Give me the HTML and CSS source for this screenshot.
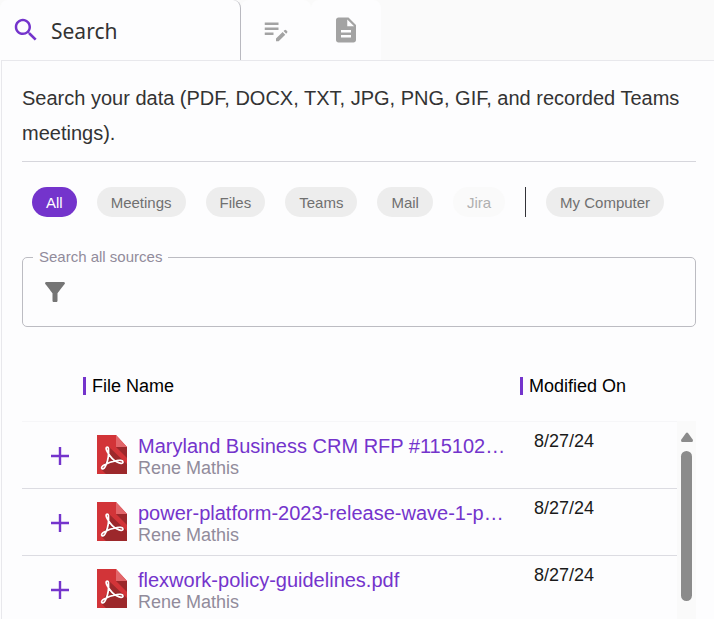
FILE: index.html
```html
<!DOCTYPE html>
<html lang="en">
<head>
<meta charset="utf-8">
<title>Search</title>
<link rel="stylesheet" href="styles.css">
</head>
<body>
<svg class="defs" aria-hidden="true">
  <symbol id="pdf" viewBox="0 0 30 39">
    <path fill="#d23438" d="M0 0h19l11 12v27H0z"/>
    <path fill="#9c282b" d="M12 12l18 17v10H9l-5-5 6-10z"/>
    <path fill="#9c282b" d="M19 12h11v11z"/>
    <path fill="#e2666a" d="M19 0l11 12H19z"/>
    <path fill="none" stroke="#fff" stroke-width="1.700" stroke-linejoin="round" stroke-linecap="round" d="M11.500 14.500c.3-1.800-1.100-3-2-2.100-1 1 .1 3.200 1.100 4.800 2.600 4.500 6 8.300 9.400 9.900 2.800 1.400 6 2 6-.1 0-1.900-3.600-2-6.400-1.400-4.500.7-8.900 2.300-12.400 4.400-2 1.200-3.400 2.800-2.200 3.700 1.400 1 3-1.400 4-3.700 1.800-4.200 2.900-10.500 2.500-15.500z"/>
  </symbol>
  <symbol id="plus" viewBox="0 0 24 24"><path d="M3 10.800h7.800V3h2.400v7.800H21v2.400h-7.800V21h-2.400v-7.800H3z"/></symbol>
</svg>

<nav class="tabs" aria-label="Sections">
  <button class="tab tab-active" type="button">
    <svg class="icon" viewBox="0 0 24 24"><path d="M15.500 14h-.79l-.28-.27C15.410 12.590 16 11.110 16 9.500 16 5.910 13.090 3 9.500 3S3 5.910 3 9.500 5.910 16 9.500 16c1.610 0 3.090-.59 4.230-1.570l.27.28v.79l5 4.990L20.490 19l-4.990-5zm-6 0C7.010 14 5 11.990 5 9.500S7.010 5 9.500 5 14 7.010 14 9.500 11.990 14 9.500 14z"/></svg>
    <span>Search</span>
  </button>
  <button class="tab" type="button" aria-label="Compose">
    <svg class="icon" viewBox="0 0 24 24"><path d="M3 10h11v2H3v-2zm0-2h11V6H3v2zm0 8h7v-2H3v2zm15.010-3.130.71-.71a.996.996 0 0 1 1.410 0l.71.71c.39.39.39 1.020 0 1.410l-.71.71-2.120-2.120zm-.71.71-5.300 5.300V21h2.120l5.300-5.300-2.120-2.120z"/></svg>
  </button>
  <button class="tab" type="button" aria-label="Document">
    <svg class="icon" viewBox="0 0 24 24"><path d="M14 2H6c-1.100 0-1.990.9-1.990 2L4 20c0 1.100.89 2 1.990 2H18c1.100 0 2-.9 2-2V8l-6-6zm2 16H8v-2h8v2zm0-4H8v-2h8v2zm-3-5V3.500L18.500 9H13z"/></svg>
  </button>
</nav>

<main class="panel">
  <p class="intro">Search your data (PDF, DOCX, TXT, JPG, PNG, GIF, and recorded Teams meetings).</p>

  <div class="chips">
    <button class="chip chip-active" type="button">All</button>
    <button class="chip" type="button">Meetings</button>
    <button class="chip" type="button">Files</button>
    <button class="chip" type="button">Teams</button>
    <button class="chip" type="button">Mail</button>
    <button class="chip" type="button" disabled>Jira</button>
    <span class="divider"></span>
    <button class="chip" type="button">My Computer</button>
  </div>

  <fieldset class="search">
    <legend><label for="query">Search all sources</label></legend>
    <div class="search-row">
      <svg class="icon" viewBox="0 0 24 24"><path d="M4.250 5.610C6.270 8.200 10 13 10 13v6c0 .55.45 1 1 1h2c.55 0 1-.45 1-1v-6s3.720-4.800 5.740-7.390A.998.998 0 0 0 18.950 4H5.040c-.83 0-1.300.95-.79 1.610z"/></svg>
      <input id="query" type="text">
    </div>
  </fieldset>

  <div class="results">
    <table>
      <thead>
        <tr>
          <th class="col-add"></th>
          <th><span class="heading">File Name</span></th>
          <th class="col-date"><span class="heading">Modified On</span></th>
        </tr>
      </thead>
      <tbody>
        <tr>
          <td class="add"><button type="button" aria-label="Add"><svg><use href="#plus"/></svg></button></td>
          <td><div class="file"><svg class="pdf"><use href="#pdf"/></svg><div class="file-text"><a href="#">Maryland Business CRM RFP #115102…</a><span>Rene Mathis</span></div></div></td>
          <td class="date">8/27/24</td>
        </tr>
        <tr>
          <td class="add"><button type="button" aria-label="Add"><svg><use href="#plus"/></svg></button></td>
          <td><div class="file"><svg class="pdf"><use href="#pdf"/></svg><div class="file-text"><a href="#">power-platform-2023-release-wave-1-p…</a><span>Rene Mathis</span></div></div></td>
          <td class="date">8/27/24</td>
        </tr>
        <tr>
          <td class="add"><button type="button" aria-label="Add"><svg><use href="#plus"/></svg></button></td>
          <td><div class="file"><svg class="pdf"><use href="#pdf"/></svg><div class="file-text"><a href="#">flexwork-policy-guidelines.pdf</a><span>Rene Mathis</span></div></div></td>
          <td class="date">8/27/24</td>
        </tr>
      </tbody>
    </table>
    <div class="scrollbar" aria-hidden="true">
      <svg class="arrow" viewBox="0 0 12 10"><path d="M5 1Q6 0 7 1l5 7q0 2-1 2H1Q0 10 0 8z"/></svg>
      <div class="thumb"></div>
    </div>
  </div>
</main>
</body>
</html>
```

FILE: styles.css
```css
* { box-sizing: border-box; }

body {
  margin: 0;
  height: 100vh;
  display: flex;
  flex-direction: column;
  overflow: hidden;
  background: #fdfdfe;
  color: #333;
  font-family: "Liberation Sans", Arial, sans-serif;
}

button, input { font: inherit; color: inherit; }
button { border: 0; margin: 0; padding: 0; background: none; }

.defs { position: absolute; width: 0; height: 0; }
.icon { width: 30px; height: 30px; flex: none; fill: currentColor; }

.tabs {
  display: flex;
  height: 60px;
  flex: none;
  background: #fafafa;
}

.tab {
  display: flex;
  align-items: center;
  justify-content: center;
  width: 70px;
  border-radius: 8px 8px 0 0;
  background: #fdfdfe;
  color: #a3a3a3;
}

.tab-active {
  width: 241px;
  justify-content: flex-start;
  gap: 10px;
  padding-left: 11px;
  border-right: 1px solid #b9b9c0;
  color: #7434cc;
  font-family: "Noto Sans", sans-serif;
  font-size: 21px;
}

.tab-active span { padding-top: 2px; color: #333; }

.panel {
  flex: 1;
  min-height: 0;
  margin-left: 1px;
  padding: 20px 18px 0 20px;
  border: solid #e8e8ec;
  border-width: 1px 0 0 1px;
  overflow: hidden;
}

.intro {
  margin: 0;
  padding-bottom: 10px;
  border-bottom: 1px solid #d6d6dc;
  font-size: 20px;
  line-height: 35px;
}

.chips { display: flex; gap: 20px; padding: 25px 10px 0; }

.chip {
  height: 30px;
  padding: 0 14px;
  border-radius: 15px;
  background: #ededed;
  color: #707070;
  font-size: 15px;
  white-space: nowrap;
}

.chip-active { background: #7434cc; color: #fff; }
.chip:disabled { background: #fafafa; color: #b0b0b0; }
.divider { width: 1px; background: #333338; }

.search {
  margin: 31px 0 0;
  padding: 0 10px;
  border: 1px solid #bcbcc2;
  border-radius: 5px;
}

.search legend {
  padding: 0 6px;
  color: #918b9b;
  font-size: 15px;
  line-height: 18px;
}

.search-row {
  display: flex;
  align-items: center;
  gap: 10px;
  height: 60px;
  padding: 0 7px 8px;
  color: #757575;
}

.search-row input {
  flex: 1;
  min-width: 0;
  height: 36px;
  border: 0;
  outline: 0;
  background: none;
  font-size: 18px;
}

.results { display: flex; margin-top: 24px; }

table {
  flex: 1;
  table-layout: fixed;
  width: 0;
  border-collapse: collapse;
  font-size: 18px;
  line-height: 20px;
}

th, td { padding: 0; text-align: left; }
th { height: 70px; color: #000; font-weight: 400; }
tr { border-bottom: 1px solid #dcdce2; }
thead tr { border-color: #f6f6f8; }
.col-add { width: 61px; }
.col-date { width: 157px; }

.heading {
  display: block;
  padding-left: 6px;
  border-left: 3px solid #7434cc;
  line-height: 18px;
}

td { height: 67px; padding-top: 2px; }
.add button { display: block; width: 24px; height: 24px; margin-left: 26px; }
.add svg { display: block; width: 24px; height: 24px; fill: #7434cc; }

.file { display: flex; align-items: flex-start; gap: 11px; padding-left: 14px; }
.pdf { width: 30px; height: 39px; margin-top: 1px; flex: none; }
.file-text { min-width: 0; white-space: nowrap; color: #918b9b; }

.file-text a {
  display: block;
  color: #7434cc;
  font-size: 20px;
  line-height: 24px;
  text-decoration: none;
}

.file-text span { display: block; }
td.date { padding: 9px 0 0 14px; color: #1a1a1a; vertical-align: top; }

.scrollbar {
  width: 19px;
  margin-top: 70px;
  padding-top: 11px;
  background: #fafafa;
}

.arrow { display: block; width: 12px; height: 10px; margin: 0 auto 9px; fill: #8b8b8b; }
.thumb { width: 11px; height: 150px; margin: 0 auto; border-radius: 6px; background: #8b8b8b; }
```
